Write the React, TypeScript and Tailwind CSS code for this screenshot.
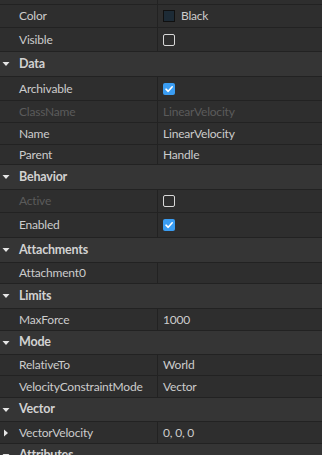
import type { ReactNode } from 'react';

type Row =
  | { kind: 'header'; label: string; h: number }
  | { kind: 'prop'; label: string; h: number; value?: ReactNode; dim?: boolean; expand?: boolean };

function Checkbox({ checked }: { checked?: boolean }) {
  if (checked) {
    return (
      <span className="w-[12px] h-[12px] rounded-[2px] bg-[#3a9df3] flex items-center justify-center">
        <svg width="10" height="10" viewBox="0 0 10 10">
          <path d="M2 5.2 L4.2 7.3 L8.2 2.8" fill="none" stroke="#ffffff" strokeWidth="1.6" strokeLinecap="round" strokeLinejoin="round" />
        </svg>
      </span>
    );
  }
  return <span className="w-[12px] h-[12px] rounded-[2px] border border-[#d8d8d8]" />;
}

const ROWS: Row[] = [
  { kind: 'prop', label: 'Color', h: 23, value: (
    <span className="flex items-center gap-[6px]">
      <span className="w-[12px] h-[12px] bg-[#1d2b36] border border-[#101010]" />
      <span>Black</span>
    </span>
  ) },
  { kind: 'prop', label: 'Visible', h: 24, value: <Checkbox /> },
  { kind: 'header', label: 'Data', h: 25 },
  { kind: 'prop', label: 'Archivable', h: 24, value: <Checkbox checked /> },
  { kind: 'prop', label: 'ClassName', h: 22, value: 'LinearVelocity', dim: true },
  { kind: 'prop', label: 'Name', h: 22, value: 'LinearVelocity' },
  { kind: 'prop', label: 'Parent', h: 20, value: 'Handle' },
  { kind: 'header', label: 'Behavior', h: 25 },
  { kind: 'prop', label: 'Active', h: 23, value: <Checkbox />, dim: true },
  { kind: 'prop', label: 'Enabled', h: 25, value: <Checkbox checked /> },
  { kind: 'header', label: 'Attachments', h: 25 },
  { kind: 'prop', label: 'Attachment0', h: 21 },
  { kind: 'header', label: 'Limits', h: 25 },
  { kind: 'prop', label: 'MaxForce', h: 22, value: '1000' },
  { kind: 'header', label: 'Mode', h: 24 },
  { kind: 'prop', label: 'RelativeTo', h: 21, value: 'World' },
  { kind: 'prop', label: 'VelocityConstraintMode', h: 22, value: 'Vector' },
  { kind: 'header', label: 'Vector', h: 24 },
  { kind: 'prop', label: 'VectorVelocity', h: 22, value: '0, 0, 0', expand: true },
  { kind: 'header', label: 'Attributes', h: 24 },
];

function DownTri() {
  return (
    <svg width="8" height="6" viewBox="0 0 8 6" className="absolute left-[2px] top-1/2 -translate-y-1/2">
      <path d="M0.5 1 L7.5 1 L4 5 Z" fill="#e6e6e6" />
    </svg>
  );
}

function RightTri() {
  return (
    <svg width="6" height="8" viewBox="0 0 6 8" className="absolute left-[3px] top-1/2 -translate-y-1/2">
      <path d="M1 0.5 L5 4 L1 7.5 Z" fill="#e6e6e6" />
    </svg>
  );
}

export default function App() {
  return (
    <div
      className="w-[322px] h-[455px] overflow-hidden bg-[#2e2e2e] text-[12px] tracking-[-0.2px] text-[#cccccc]"
      style={{ fontFamily: "'Lato', 'Open Sans', sans-serif" }}
    >
      {/* partial row above */}
      <div className="h-[5px] border-b border-[#222222] flex">
        <div className="w-[158px] border-r border-[#222222]" />
      </div>
      {ROWS.map((r) =>
        r.kind === 'header' ? (
          <div
            key={r.label}
            className="relative flex items-center bg-[#353535] border-b border-[#222222] pl-[19px] font-bold text-[12.5px] text-[#d2d2d2]"
            style={{ height: r.h }}
          >
            <DownTri />
            {r.label}
          </div>
        ) : (
          <div key={r.label} className="relative flex border-b border-[#222222]" style={{ height: r.h }}>
            {r.expand && <RightTri />}
            <div
              className={`w-[158px] shrink-0 border-r border-[#222222] pl-[19px] flex items-center ${
                r.dim ? 'text-[#5b5b5b]' : ''
              }`}
            >
              {r.label}
            </div>
            <div className={`flex-1 pl-[5px] flex items-center ${r.dim ? 'text-[#5b5b5b]' : ''}`}>
              {r.value}
            </div>
          </div>
        )
      )}
    </div>
  );
}
